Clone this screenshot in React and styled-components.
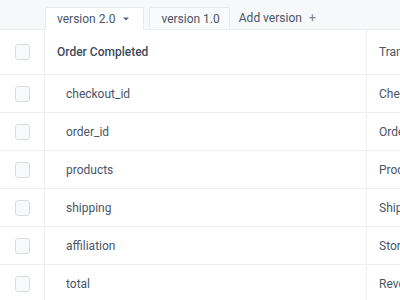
import React from "react";
import styled, { createGlobalStyle } from "styled-components";

const Global = createGlobalStyle`
  html, body { margin: 0; padding: 0; background: #fff; }
  body { font-family: Roboto, "Liberation Sans", Arial, sans-serif; -webkit-font-smoothing: antialiased; }
`;

const Page = styled.div`
  width: 400px;
  height: 300px;
  overflow: hidden;
  background: #fff;
  color: #4a5566;
`;

const TabBar = styled.div`
  display: flex;
  align-items: flex-end;
  gap: 5px;
  height: 30px;
  padding-left: 45px;
  background: #f7f8f9;
  border-bottom: 1px solid #eceef0;
  box-sizing: border-box;
`;

const Tab = styled.div`
  display: flex;
  align-items: center;
  gap: 8px;
  height: ${(p) => (p.$active ? "23px" : "22px")};
  padding: 0 ${(p) => (p.$active ? "14px" : "9px")} 0 11px;
  box-sizing: border-box;
  font-size: 12px;
  color: #4a5566;
  background: ${(p) => (p.$active ? "#fff" : "#f9fafb")};
  border: 1px solid #e8eaed;
  border-bottom: none;
  border-radius: 2px 2px 0 0;
  margin-bottom: ${(p) => (p.$active ? "-1px" : "0")};
  white-space: nowrap;
`;

const AddTab = styled.div`
  display: flex;
  align-items: center;
  gap: 7px;
  height: 22px;
  padding: 0 4px;
  font-size: 12px;
  color: #4a5566;
  white-space: nowrap;
`;

const Plus = styled.span`
  font-size: 12px;
  color: #7a8494;
`;

const Table = styled.div`
  display: flex;
  flex-direction: column;
`;

const Row = styled.div`
  display: grid;
  grid-template-columns: 45px 322px 1fr;
  height: ${(p) => (p.$header ? "45px" : "38px")};
  border-bottom: 1px solid #eceef0;
  box-sizing: border-box;
`;

const CheckCell = styled.div`
  display: flex;
  align-items: center;
  justify-content: center;
  border-right: 1px solid #eceef0;
`;

const Checkbox = styled.div`
  width: 15px;
  height: 16px;
  box-sizing: border-box;
  border: 1px solid #d9dce0;
  border-radius: 3px;
  background: #f8f9fa;
`;

const NameCell = styled.div`
  display: flex;
  align-items: center;
  padding-left: ${(p) => (p.$header ? "12px" : "21px")};
  font-size: 12px;
  font-weight: ${(p) => (p.$header ? 500 : 400)};
  color: ${(p) => (p.$header ? "#3f4b5c" : "#4a5566")};
  border-right: 1px solid #eceef0;
  white-space: nowrap;
`;

const DescCell = styled.div`
  display: flex;
  align-items: center;
  padding-left: 12px;
  font-size: 12px;
  color: #4a5566;
  white-space: nowrap;
  overflow: hidden;
`;

const Caret = () => (
  <svg width="6" height="4" viewBox="0 0 6 4">
    <path d="M0 0.5 L6 0.5 L3 3.5 Z" fill="#5a6474" />
  </svg>
);

const rows = [
  ["checkout_id", "Checkout ID"],
  ["order_id", "Order ID"],
  ["products", "Products"],
  ["shipping", "Shipping"],
  ["affiliation", "Store"],
  ["total", "Revenue"],
];

export default function App() {
  return (
    <Page>
      <Global />
      <TabBar>
        <Tab $active>
          version 2.0 <Caret />
        </Tab>
        <Tab>version 1.0</Tab>
        <AddTab>
          Add version <Plus>+</Plus>
        </AddTab>
      </TabBar>
      <Table>
        <Row $header>
          <CheckCell>
            <Checkbox />
          </CheckCell>
          <NameCell $header>Order Completed</NameCell>
          <DescCell>Transaction</DescCell>
        </Row>
        {rows.map(([n, d]) => (
          <Row key={n}>
            <CheckCell>
              <Checkbox />
            </CheckCell>
            <NameCell>{n}</NameCell>
            <DescCell>{d}</DescCell>
          </Row>
        ))}
      </Table>
    </Page>
  );
}
